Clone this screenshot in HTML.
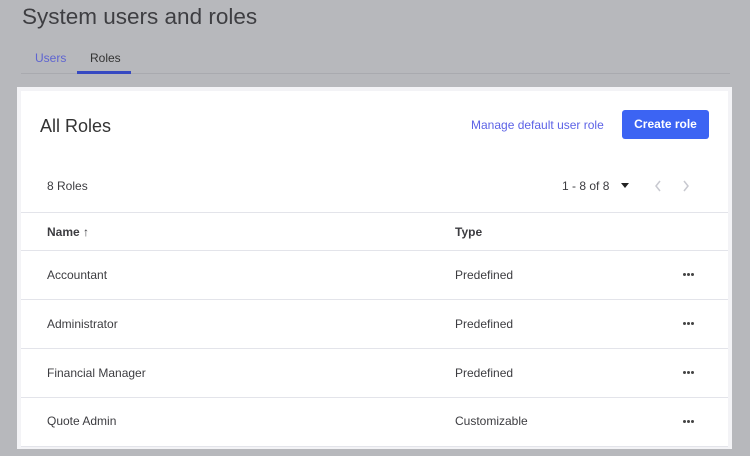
<!DOCTYPE html>
<html><head><style>
body{margin:0;width:750px;height:456px;background:#b7b8bc;font-family:"Liberation Sans",sans-serif;position:relative;overflow:hidden}
.a{position:absolute;white-space:nowrap}
.card{position:absolute;left:17px;top:87px;width:715px;height:362px;background:#f3f3f6}
.in{position:absolute;left:21px;top:91px;width:707px;height:356px;background:#fff}
.ln{position:absolute;left:21px;width:707px;height:1px;background:#e3e4ea}
.r{font-size:12px;color:#3c3c40}
.d{position:absolute;width:12px;height:3px}
.d i{position:absolute;top:0;width:3px;height:3px;border-radius:50%;background:#444}
</style></head><body>
<div class="a" style="left:22px;top:4px;font-size:22.5px;color:#3e3e42">System users and roles</div>
<div class="a" style="left:35px;top:51px;font-size:12px;color:#5e64d1">Users</div>
<div class="a" style="left:90px;top:51px;font-size:12px;color:#333">Roles</div>
<div class="a" style="left:21px;top:73px;width:709px;height:1px;background:#a9aaaf"></div>
<div class="a" style="left:77px;top:71px;width:54px;height:3px;background:#3649c2"></div>
<div class="card"></div><div class="in"></div>
<div class="a" style="left:40px;top:116px;font-size:18px;color:#333">All Roles</div>
<div class="a" style="left:471px;top:118px;font-size:12px;color:#5d63e6">Manage default user role</div>
<div class="a" style="left:622px;top:110px;width:87px;height:29px;background:#3c64f3;border-radius:3px;color:#fff;font-size:12px;font-weight:bold;text-align:center;line-height:29px">Create role</div>
<div class="a r" style="left:47px;top:179px">8 Roles</div>
<div class="a r" style="left:562px;top:179px">1 - 8 of 8</div>
<div class="a" style="left:621px;top:183px;width:0;height:0;border-left:4px solid transparent;border-right:4px solid transparent;border-top:5px solid #222"></div>
<svg class="a" style="left:654px;top:180px" width="40" height="12"><path d="M6 1L2 6L6 11M30 1L34 6L30 11" fill="none" stroke="#c8c9d0" stroke-width="1.5"/></svg>
<div class="ln" style="top:212px"></div>
<div class="a r" style="left:47px;top:225px;font-weight:bold">Name ↑</div>
<div class="a r" style="left:455px;top:225px;font-weight:bold">Type</div>
<div class="ln" style="top:250px"></div>
<div class="a r" style="left:47px;top:268px">Accountant</div><div class="a r" style="left:455px;top:268px">Predefined</div><div class="d" style="left:683px;top:273px"><i style="left:0"></i><i style="left:4px"></i><i style="left:8px"></i></div>
<div class="ln" style="top:299px"></div>
<div class="a r" style="left:47px;top:317px">Administrator</div><div class="a r" style="left:455px;top:317px">Predefined</div><div class="d" style="left:683px;top:322px"><i style="left:0"></i><i style="left:4px"></i><i style="left:8px"></i></div>
<div class="ln" style="top:348px"></div>
<div class="a r" style="left:47px;top:366px">Financial Manager</div><div class="a r" style="left:455px;top:366px">Predefined</div><div class="d" style="left:683px;top:371px"><i style="left:0"></i><i style="left:4px"></i><i style="left:8px"></i></div>
<div class="ln" style="top:397px"></div>
<div class="a r" style="left:47px;top:414px">Quote Admin</div><div class="a r" style="left:455px;top:414px">Customizable</div><div class="d" style="left:683px;top:420px"><i style="left:0"></i><i style="left:4px"></i><i style="left:8px"></i></div>
<div class="ln" style="top:446px"></div>
</body></html>
